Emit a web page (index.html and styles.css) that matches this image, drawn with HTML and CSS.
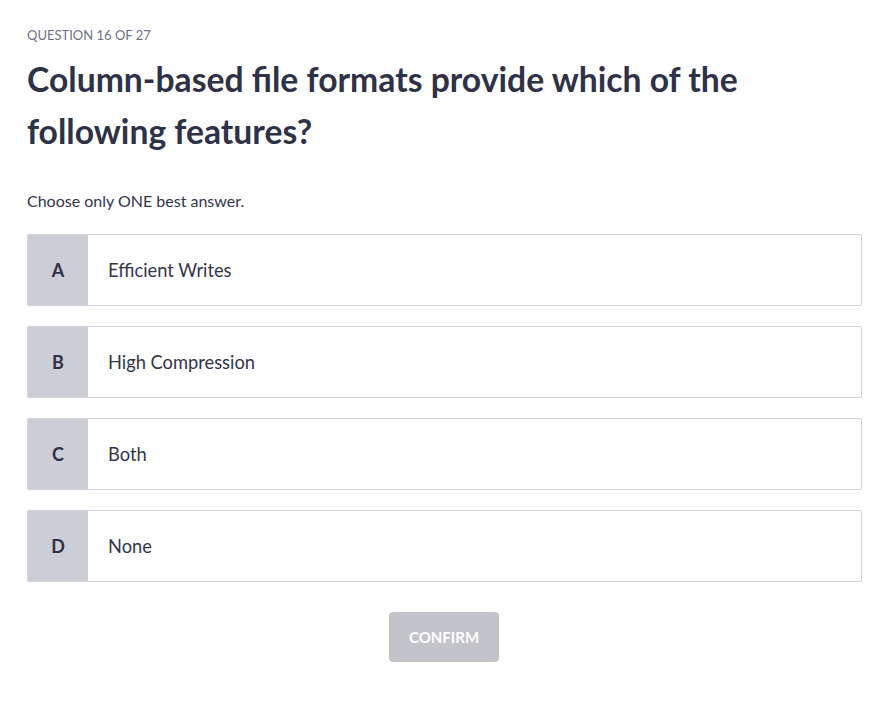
FILE: index.html
```html
<!DOCTYPE html>
<html lang="en">
<head>
<meta charset="utf-8">
<title>Question 16 of 27</title>
<link rel="stylesheet" href="styles.css">
</head>
<body>
<main class="quiz">
  <div class="counter">QUESTION 16 OF 27</div>
  <h1 class="question">Column-based file formats provide which of the following features?</h1>
  <p class="hint">Choose only ONE best answer.</p>
  <ul class="options">
    <li class="option"><span class="letter">A</span><span class="text">Efficient Writes</span></li>
    <li class="option"><span class="letter">B</span><span class="text">High Compression</span></li>
    <li class="option"><span class="letter">C</span><span class="text">Both</span></li>
    <li class="option"><span class="letter">D</span><span class="text">None</span></li>
  </ul>
  <div class="actions"><button class="confirm" disabled>CONFIRM</button></div>
</main>
</body>
</html>
```
FILE: styles.css
```css
html, body {
  margin: 0;
  padding: 0;
  background: #ffffff;
}
body {
  font-family: Lato, "Open Sans", sans-serif;
  color: #33354a;
}
.quiz {
  padding: 27px 26px 0 27px;
}
.counter {
  font-size: 13px;
  line-height: 16px;
  color: #6e7287;
}
.question {
  margin: 10px 0 0 0;
  font-size: 33.7px;
  line-height: 52px;
  font-weight: 700;
  color: #2f3146;
  max-width: 760px;
}
.hint {
  margin: 34px 0 0 0;
  font-size: 16px;
  line-height: 20px;
  color: #33354a;
}
.options {
  list-style: none;
  margin: 23px 0 0 0;
  padding: 0;
  display: flex;
  flex-direction: column;
  gap: 20px;
}
.option {
  display: flex;
  height: 72px;
  box-sizing: border-box;
  border: 1px solid #cfd0d8;
  border-radius: 2px;
  overflow: hidden;
}
.letter {
  width: 60px;
  flex: none;
  background: #cbcdd7;
  display: flex;
  align-items: center;
  justify-content: center;
  font-size: 18px;
  font-weight: 700;
  color: #2f3146;
}
.text {
  display: flex;
  align-items: center;
  padding-left: 20px;
  font-size: 18.3px;
  color: #33354a;
}
.actions {
  display: flex;
  justify-content: center;
  margin-top: 30px;
}
.confirm {
  width: 110px;
  height: 50px;
  border: none;
  border-radius: 4px;
  background: #c3c4ca;
  color: #ffffff;
  font-family: Lato, sans-serif;
  font-size: 15px;
  font-weight: 700;
  margin-left: -1px;
}
```
